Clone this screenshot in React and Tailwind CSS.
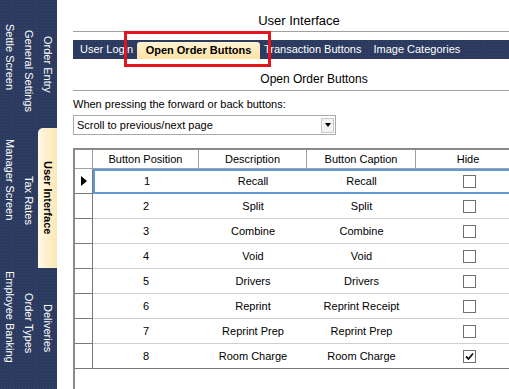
import { useState } from "react";

const sideColumns = [
  {
    width: "w-[20px]",
    tabs: [
      { label: "Settle Screen", h: "h-[115px]" },
      { label: "Manager Screen", h: "h-[130px]" },
      { label: "Employee Banking", h: "flex-1" },
    ],
  },
  {
    width: "w-[18px]",
    tabs: [
      { label: "General Settings", h: "h-[142px]" },
      { label: "Tax Rates", h: "h-[116px]" },
      { label: "Order Types", h: "flex-1" },
    ],
  },
  {
    width: "w-[19px]",
    tabs: [
      { label: "Order Entry", h: "h-[128px]" },
      { label: "User Interface", h: "h-[140px]", active: true },
      { label: "Deliveries", h: "flex-1" },
    ],
  },
];

const rows = [
  { pos: 1, desc: "Recall", caption: "Recall", hide: false },
  { pos: 2, desc: "Split", caption: "Split", hide: false },
  { pos: 3, desc: "Combine", caption: "Combine", hide: false },
  { pos: 4, desc: "Void", caption: "Void", hide: false },
  { pos: 5, desc: "Drivers", caption: "Drivers", hide: false },
  { pos: 6, desc: "Reprint", caption: "Reprint Receipt", hide: false },
  { pos: 7, desc: "Reprint Prep", caption: "Reprint Prep", hide: false },
  { pos: 8, desc: "Room Charge", caption: "Room Charge", hide: true },
];

const navy =
  "bg-[#2b3a5e] bg-[radial-gradient(#34466e_1px,transparent_1px)] bg-[length:3px_3px]";

function CheckBox({ checked }) {
  return (
    <div className="w-[13px] h-[13px] border border-[#707070] bg-white flex items-center justify-center">
      {checked && (
        <svg width="9" height="9" viewBox="0 0 9 9">
          <path d="M1 4.5 L3.5 7 L8 1.5" stroke="#111" strokeWidth="1.8" fill="none" />
        </svg>
      )}
    </div>
  );
}

export default function App() {
  const [selected] = useState(0);

  return (
    <div className="w-[509px] h-[389px] overflow-hidden flex bg-white text-[11px] text-black font-['Liberation_Sans',Arial,sans-serif]">
      {/* side tabs */}
      <div className={`w-[57px] h-full flex shrink-0 ${navy}`}>
        {sideColumns.map((col, i) => (
          <div key={i} className={`${col.width} h-full flex flex-col`}>
            {col.tabs.map((t) =>
              t.active ? (
                <div
                  key={t.label}
                  className={`${t.h} rounded-tl-[5px] bg-[linear-gradient(to_right,#fff8e4,#fde7b4)] flex items-center justify-center`}
                >
                  <span className="[writing-mode:vertical-rl] font-bold text-[11px] text-black">{t.label}</span>
                </div>
              ) : (
                <div key={t.label} className={`${t.h} flex items-center justify-center`}>
                  <span className="[writing-mode:vertical-rl] text-white text-[11px] whitespace-nowrap">{t.label}</span>
                </div>
              )
            )}
          </div>
        ))}
      </div>

      {/* main panel */}
      <div className="relative flex-1 pl-[16px] overflow-hidden">
        <div className="w-[452px]">
          <div className="h-[32px] flex items-end justify-center pb-[3px] leading-[14px] border-b border-[#a0a0a0] text-[13px]">
            User Interface
          </div>

          <div className={`mt-[8px] h-[19px] w-[482px] flex items-end text-white text-[11px] ${navy}`}>
            <div className="w-[64px] h-full flex items-center pl-[7px]">User Login</div>
            <div className="w-[123px] h-[17px] rounded-t-[3px] bg-[linear-gradient(#fff3d2,#fde2a4)] text-black font-bold flex items-center justify-center">
              Open Order Buttons
            </div>
            <div className="h-full flex items-center pl-[4px] pr-[12px]">Transaction Buttons</div>
            <div className="h-full flex items-center">Image Categories</div>
          </div>

          <div className="h-[32px] w-[482px] flex items-end justify-center pb-[4px] leading-[14px] border-b border-[#a0a0a0] text-[12px]">
            Open Order Buttons
          </div>

          <div className="mt-[6px] leading-[14px]">When pressing the forward or back buttons:</div>

          <div className="mt-[4px] w-[263px] h-[20px] border border-[#a9a9a9] flex items-center justify-between pl-[3px] pr-[1px]">
            <span>Scroll to previous/next page</span>
            <div className="w-[13px] h-[15px] border border-[#c8c8c8] bg-[#f3f3f3] flex items-center justify-center">
              <div className="w-0 h-0 border-l-[3px] border-r-[3px] border-t-[4px] border-l-transparent border-r-transparent border-t-black" />
            </div>
          </div>

          {/* grid */}
          <div className="mt-[13px] w-[460px] h-[242px] border-l-2 border-t-2 border-[#8a8a8a] flex flex-col">
            <div className="h-[19px] flex border-b border-[#a0a0a0] shrink-0">
              <div className="w-[18px] border-r border-[#a0a0a0]" />
              <div className="w-[106px] border-r border-[#a0a0a0] flex items-center justify-center">Button Position</div>
              <div className="w-[108px] border-r border-[#a0a0a0] flex items-center justify-center">Description</div>
              <div className="w-[109px] border-r border-[#a0a0a0] flex items-center justify-center">Button Caption</div>
              <div className="w-[104px] flex items-center justify-center">Hide</div>
            </div>
            {rows.map((r, i) => (
              <div key={r.pos} className="h-[25px] flex shrink-0">
                <div className="w-[18px] border-r border-b border-[#7a7a7a] flex items-center justify-center">
                  {i === selected && (
                    <div className="w-0 h-0 border-t-[5px] border-b-[5px] border-l-[6px] border-t-transparent border-b-transparent border-l-black" />
                  )}
                </div>
                <div
                  className={`flex-1 flex items-center ${
                    i === selected
                      ? "border-2 border-[#5e9ad6]"
                      : i === rows.length - 1
                      ? "border-b border-[#7a7a7a]"
                      : "border-b border-[#cfcfcf]"
                  }`}
                >
                  <div className={`${i === selected ? "w-[104px]" : "w-[106px]"} text-center`}>{r.pos}</div>
                  <div className="w-[108px] text-center">{r.desc}</div>
                  <div className="w-[109px] text-center">{r.caption}</div>
                  <div className="w-[104px] flex justify-center pl-[2px]">
                    <CheckBox checked={r.hide} />
                  </div>
                </div>
              </div>
            ))}
            <div className="flex-1 border-b border-[#d8d8d8]" />
          </div>
        </div>

        {/* annotation highlight */}
        <div className="absolute left-[67px] top-[31px] w-[147px] h-[36px] border-[3px] border-[#e3141b] pointer-events-none" />
      </div>
    </div>
  );
}
